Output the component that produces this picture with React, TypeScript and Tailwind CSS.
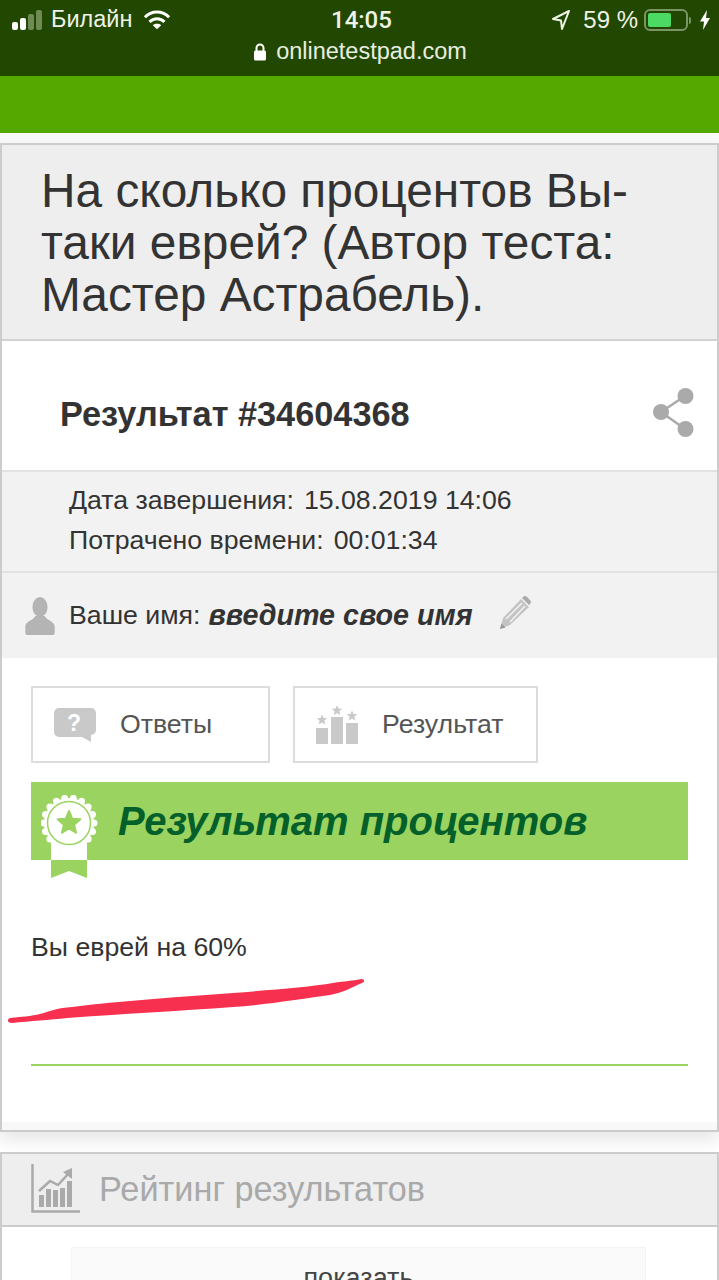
import React from 'react';

const sans = { fontFamily: '"Liberation Sans", Arial, sans-serif' };

const StatusBar = () => (
  <div className="h-[76px] bg-[#224700] text-[#eef3e6] relative">
    <div className="flex items-center justify-between h-[40px] pl-[11px] pr-[8px]">
      <div className="flex items-center w-[240px]">
        <svg width="34" height="24" viewBox="0 0 34 24" className="mr-[6px]">
          <rect x="1" y="14" width="6" height="8" rx="2" fill="#fff" />
          <rect x="9" y="10" width="6" height="12" rx="2" fill="#fff" />
          <rect x="17" y="6" width="6" height="16" rx="2" fill="#6e8a55" />
          <rect x="25" y="2" width="6" height="20" rx="2" fill="#6e8a55" />
        </svg>
        <span className="text-[23.5px] leading-none">Билайн</span>
        <svg width="28" height="24" viewBox="0 0 30 24" className="ml-[11px]" fill="none" stroke="#fff" strokeWidth="3.2">
          <path d="M2 9 C9 1.500 21 1.500 28 9" />
          <path d="M7 14 C11.500 9.500 18.500 9.500 23 14" />
          <path d="M15 22 L10.500 17.500 C13 15.500 17 15.500 19.500 17.500 Z" fill="#fff" stroke="none" />
        </svg>
      </div>
      <span className="text-[24px] font-medium leading-none absolute left-[331px] top-[8px]" style={{ fontFamily: 'Roboto, sans-serif' }}>14:05</span>
      <div className="flex items-center">
        <svg width="20" height="22" viewBox="0 0 20 22" fill="none" stroke="#eef3e6" strokeWidth="2" strokeLinejoin="round" className="mr-[12px]">
          <path d="M18 2 L2 10 L10 11.500 L11 20 Z" />
        </svg>
        <span className="text-[24px] leading-none">59 %</span>
        <div className="ml-[6px] w-[44px] h-[22px] rounded-[6px] border-2 border-[#7c9566] p-[2px]">
          <div className="w-[23px] h-full bg-[#4cd964] rounded-[2px]" />
        </div>
        <div className="w-[2px] h-[7px] bg-[#7c9566] ml-[1px] rounded-r-sm" />
        <svg width="12" height="22" viewBox="0 0 12 22" className="ml-[8px]">
          <path d="M8 1 L1 12.500 L5 12.500 L4 21 L11 9 L7 9 Z" fill="#fff" />
        </svg>
      </div>
    </div>
    <div className="flex items-center justify-center h-[24px] pl-[1px]">
      <svg width="14" height="20" viewBox="0 0 14 20" className="mr-[9px]">
        <path d="M3.500 9 V6 a3.500 3.500 0 0 1 7 0 V9" fill="none" stroke="#fff" strokeWidth="2" />
        <rect x="1" y="8.500" width="12" height="10" rx="1.500" fill="#fff" />
      </svg>
      <span className="text-[23.5px] leading-none text-[#e8eee0]">onlinetestpad.com</span>
    </div>
  </div>
);

const ShareIcon = () => (
  <svg width="41" height="50" viewBox="0 0 41 50" fill="#aaaaaa">
    <path d="M32 9 L8 25 L32 42" fill="none" stroke="#aaaaaa" strokeWidth="2.500" />
    <circle cx="32.500" cy="9" r="8" />
    <circle cx="8" cy="25" r="8" />
    <circle cx="32.500" cy="42" r="8" />
  </svg>
);

const UserIcon = () => (
  <svg width="32" height="38" viewBox="0 0 32 40" fill="#b4b4b4">
    <ellipse cx="16" cy="10.500" rx="8" ry="10.500" />
    <path d="M11 20 C9 25 1 25 0.500 31 V37 a3 3 0 0 0 3 3 H28.500 a3 3 0 0 0 3 -3 V31 C31 25 23 25 21 20 Z" />
  </svg>
);

const PencilIcon = () => (
  <svg width="32" height="34" viewBox="0 0 32 34">
    <path d="M1 33 L4 22 L22 3 L30 11 L11 29 Z" fill="#c4c4c4" />
    <path d="M1 33 L2.500 27.500 L6.500 31.500 Z" fill="#999" />
    <path d="M7 23 L23 7 M11 26 L26 10" stroke="#f2f2f2" strokeWidth="1.500" />
    <path d="M24 1 a3 3 0 0 1 4 0 L31 4 a3 3 0 0 1 0 4 L30 9 L23 2 Z" fill="#aaa" />
  </svg>
);

const QuestionIcon = () => (
  <svg width="42" height="34" viewBox="0 0 42 34">
    <path d="M5 0 H37 a5 5 0 0 1 5 5 V22 a5 5 0 0 1 -5 5 H37 V34 L28 29 H5 a5 5 0 0 1 -5 -5 V5 a5 5 0 0 1 5 -5 Z" fill="#c9c9c9" />
    <text x="20" y="23" fontSize="23" fontWeight="700" fill="#fff" textAnchor="middle" style={sans}>?</text>
  </svg>
);

const Star = ({ cx, cy, r }: { cx: number; cy: number; r: number }) => {
  const pts = Array.from({ length: 10 }, (_, i) => {
    const a = (Math.PI / 5) * i - Math.PI / 2;
    const d = i % 2 === 0 ? r : r * 0.45;
    return `${cx + d * Math.cos(a)},${cy + d * Math.sin(a)}`;
  }).join(' ');
  return <polygon points={pts} strokeLinejoin="round" />;
};

const PodiumIcon = () => (
  <svg width="42" height="38" viewBox="0 0 42 38" fill="#c9c9c9">
    <rect x="0" y="22" width="12" height="16" />
    <rect x="15" y="11" width="12" height="27" />
    <rect x="30" y="17" width="12" height="21" />
    <Star cx={6} cy={14} r={5.500} />
    <Star cx={21} cy={4.500} r={5.500} />
    <Star cx={36} cy={10} r={5.500} />
  </svg>
);

const Badge = () => {
  const scallop = Array.from({ length: 18 }, (_, i) => {
    const a = (Math.PI / 9) * i;
    return <circle key={i} cx={28 + 25 * Math.cos(a)} cy={28 + 25 * Math.sin(a)} r={3.500} fill="#fff" />;
  });
  return (
    <svg width="58" height="86" viewBox="0 0 58 86" className="absolute left-[10px] top-[13px]">
      <rect x="10" y="46" width="36" height="19" fill="#fff" />
      <path d="M10 65 H46 V83 L28 76 L10 83 Z" fill="#9ad35f" />
      <circle cx="28" cy="28" r="25" fill="#fff" />
      {scallop}
      <circle cx="28" cy="28" r="21.500" fill="none" stroke="#9ad35f" strokeWidth="1.500" />
      <g fill="#9ad35f" stroke="#9ad35f" strokeWidth="2">
        <Star cx={28} cy={28} r={12} />
      </g>
    </svg>
  );
};

const ChartIcon = () => (
  <svg width="50" height="50" viewBox="0 0 50 50">
    <path d="M1.500 0 V47.500 H49" fill="none" stroke="#aaaaaa" strokeWidth="2.500" />
    <path d="M8 27 L19 17 L27 21 L38 9" fill="none" stroke="#aaaaaa" strokeWidth="2.500" />
    <path d="M32 8 L41 4 L41 15 Z" fill="#aaaaaa" />
    <g fill="#aaaaaa">
      <rect x="8" y="31" width="5" height="12" />
      <rect x="15" y="25" width="5" height="18" />
      <rect x="22" y="26" width="5" height="17" />
      <rect x="29" y="24" width="5" height="19" />
      <rect x="36" y="17" width="5" height="26" />
    </g>
  </svg>
);

const TabButton = ({ icon, label, className }: { icon: React.ReactNode; label: string; className: string }) => (
  <div className={`h-[77px] border-2 border-[#dcdcdc] flex items-center text-[26.7px] text-[#555] ${className}`}>
    {icon}
    <span>{label}</span>
  </div>
);

export default function App() {
  return (
    <div className="w-[719px] h-[1280px] overflow-hidden bg-white relative" style={sans}>
      <StatusBar />
      <div className="h-[57px] bg-[#55a800]" />
      <div className="h-[10px] bg-[#f9f9f9]" />

      <div className="h-[989px] border-2 border-[#cccccc] shadow-[0_8px_16px_rgba(0,0,0,0.1)] bg-white flex flex-col">
        <div className="h-[196px] bg-[#eeeeee] border-b-2 border-[#d2d2d2] pl-[39px] pr-[20px] pt-[20px] text-[47.8px] leading-[52px] text-[#333]">
          На сколько процентов Вы-
          <br />
          таки еврей? (Автор теста:
          <br />
          Мастер Астрабель).
        </div>
        <div className="h-[129px] flex items-center justify-between pl-[58px] pr-[23px] pt-[18px]">
          <span className="text-[34.3px] font-bold text-[#333]">Результат #34604368</span>
          <span className="flex -mt-[5px]"><ShareIcon /></span>
        </div>
        <div className="h-[103px] bg-[#f2f2f2] border-y-2 border-[#e2e2e2] pl-[67px] pt-[8px] text-[26.7px] leading-[40px] text-[#333]">
          <div className="flex gap-[10px]"><span>Дата завершения:</span><span>15.08.2019 14:06</span></div>
          <div className="flex gap-[10px]"><span>Потрачено времени:</span><span>00:01:34</span></div>
        </div>
        <div className="h-[85px] bg-[#f2f2f2] flex items-center pl-[22px] text-[#333]">
          <UserIcon />
          <span className="text-[26.7px] ml-[13px]">Ваше имя:</span>
          <span className="text-[28.7px] font-bold italic ml-[8px]">введите свое имя</span>
          <span className="ml-[26px] flex -mt-[6px]"><PencilIcon /></span>
        </div>

        <div className="flex-1 flex flex-col px-[29px] pt-[28px]">
          <div className="flex gap-[23px]">
            <TabButton className="w-[239px] pl-[21px]" label="Ответы" icon={<span className="mr-[24px] flex"><QuestionIcon /></span>} />
            <TabButton className="w-[245px] pl-[21px]" label="Результат" icon={<span className="mr-[24px] flex"><PodiumIcon /></span>} />
          </div>
          <div className="relative mt-[19px] h-[78px] w-[657px] bg-[#9ad35f] pl-[87px] flex items-center text-[40px] font-bold italic text-[#04602a]">
            <Badge />
            <span>Результат процентов</span>
          </div>
          <p className="mt-[72px] text-[26.7px] leading-[30px] text-[#333]">Вы еврей на 60%</p>
          <div className="mt-[102px] h-[2px] w-[657px] bg-[#9ad35f]" />
          <div className="mt-auto -mx-[29px] h-[8px] bg-[#f8f8f8]" />
        </div>
      </div>

      <div className="h-[20px]" />

      <div className="border-x-2 border-[#cccccc]">
        <div className="h-[75px] -mx-[2px] bg-[#eeeeee] border-2 border-[#cccccc] flex items-center pl-[29px]">
          <span className="flex -mt-[2px]"><ChartIcon /></span>
          <span className="ml-[18px] text-[34.3px] text-[#a9a9a9]">Рейтинг результатов</span>
        </div>
        <div className="mt-[20px] ml-[69px] w-[575px] h-[60px] bg-[#fafafa] border border-[#f4f4f4] text-center text-[27px] text-[#444] pt-[10px]">показать</div>
      </div>

      {/* red marker scribble over the screenshot */}
      <svg className="absolute left-0 top-[970px]" width="380" height="60" viewBox="0 0 380 60">
        <path
          d="M10 48 C20 47 32 46 40 44 C50 41 58 38 72 37 C120 31 180 27 233 23 C270 20 310 17 333 13 C345 11 352 11 361 9 C365 9 365 12 362 13 C352 17 345 22 330 25 C300 29 265 35 233 37 C180 41 120 44 67 48 C50 50 30 51 12 53 C7 53 7 49 10 48 Z"
          fill="#f8304f"
        />
      </svg>
    </div>
  );
}
